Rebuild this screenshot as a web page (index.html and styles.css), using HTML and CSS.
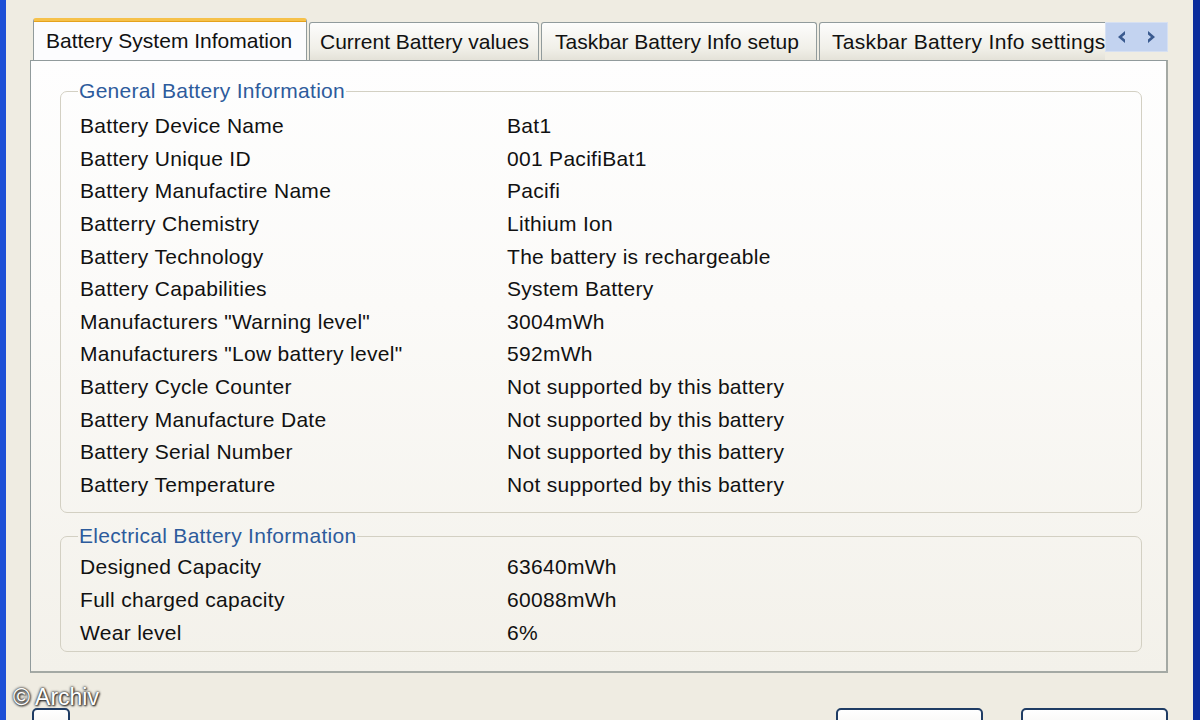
FILE: index.html
```html
<!DOCTYPE html>
<html lang="en">
<head>
  <meta charset="UTF-8">
  <title>Battery System Infomation</title>
  <link rel="stylesheet" href="styles.css">
</head>
<body>
  <div class="window">
    <div class="tabbar">
      <div class="tabs">
        <div class="tab tab-1 active">Battery System Infomation</div>
        <div class="tab tab-2">Current Battery values</div>
        <div class="tab tab-3">Taskbar Battery Info setup</div>
        <div class="tab tab-4">Taskbar Battery Info settings</div>
      </div>
      <div class="scroller">
        <svg width="12" height="16" viewBox="0 0 12 16"><path d="M10 2 L3 8 L10 14 L10 10.5 L7 8 L10 5.5 Z" fill="#3a5a8f"/></svg>
        <svg width="12" height="16" viewBox="0 0 12 16"><path d="M2 2 L9 8 L2 14 L2 10.5 L5 8 L2 5.5 Z" fill="#3a5a8f"/></svg>
      </div>
    </div>

    <div class="panel">
      <fieldset class="group group-general">
        <legend>General Battery Information</legend>
        <div class="rows">
          <span>Battery Device Name</span><span>Bat1</span>
          <span>Battery Unique ID</span><span>001 PacifiBat1</span>
          <span>Battery Manufactire Name</span><span>Pacifi</span>
          <span>Batterry Chemistry</span><span>Lithium Ion</span>
          <span>Battery Technology</span><span>The battery is rechargeable</span>
          <span>Battery Capabilities</span><span>System Battery</span>
          <span>Manufacturers "Warning level"</span><span>3004mWh</span>
          <span>Manufacturers "Low battery level"</span><span>592mWh</span>
          <span>Battery Cycle Counter</span><span>Not supported by this battery</span>
          <span>Battery Manufacture Date</span><span>Not supported by this battery</span>
          <span>Battery Serial Number</span><span>Not supported by this battery</span>
          <span>Battery Temperature</span><span>Not supported by this battery</span>
        </div>
      </fieldset>

      <fieldset class="group group-electrical">
        <legend>Electrical Battery Information</legend>
        <div class="rows">
          <span>Designed Capacity</span><span>63640mWh</span>
          <span>Full charged capacity</span><span>60088mWh</span>
          <span>Wear level</span><span>6%</span>
        </div>
      </fieldset>
    </div>

    <div class="buttons">
      <div class="btn btn-small"></div>
      <div class="spacer"></div>
      <div class="btn"></div>
      <div class="btn"></div>
    </div>

    <div class="watermark">© Archiv</div>
  </div>
</body>
</html>
```

FILE: styles.css
```css
body {
  margin: 0;
  font-family: "Liberation Sans", Arial, sans-serif;
  overflow: hidden;
}
.window {
  position: relative;
  width: 1200px;
  height: 720px;
  box-sizing: border-box;
  background: #efece2;
  border-left: 6px solid #1d4fd6;
  border-right: 7px solid #0a2c9c;
  padding: 18px 25px 0 24px;
  font-size: 21px;
  letter-spacing: 0.3px;
  color: #111;
  overflow: hidden;
}
.tabbar {
  display: flex;
  align-items: flex-end;
  height: 42px;
  position: relative;
  z-index: 1;
}
.tabs {
  flex: 1;
  min-width: 0;
  display: flex;
  align-items: flex-end;
  overflow: hidden;
  height: 42px;
  letter-spacing: 0;
}
.tab {
  flex: none;
  height: 38px;
  line-height: 38px;
  box-sizing: border-box;
  margin-left: 2px;
  padding-left: 10px;
  white-space: nowrap;
  border: 1px solid #919b9c;
  border-bottom: none;
  border-radius: 3px 3px 0 0;
  background: linear-gradient(#fdfdfc, #f0efe8 70%, #e4e2d8);
}
.tab-1 { width: 274px; margin-left: 3px; }
.tab-2 { width: 230px; }
.tab-3 { width: 276px; padding-left: 13px; }
.tab-4 { width: 300px; padding-left: 12px; letter-spacing: 0.3px; }
.tab.active {
  height: 43px;
  line-height: 40px;
  padding-left: 12px;
  margin-bottom: -1px;
  background: #fcfcfe;
  border-top: 3px solid #f6c14a;
  box-shadow: inset 0 1px 0 #e5a21d;
}
.scroller {
  width: 63px;
  height: 30px;
  margin-bottom: 8px;
  box-sizing: border-box;
  display: flex;
  align-items: center;
  justify-content: space-around;
  background: #c3d3f0;
  border: 1px solid #d6e0f2;
}
.panel {
  height: 613px;
  box-sizing: border-box;
  border: 1px solid #919b9c;
  border-right: 2px solid #a4a9a4;
  border-bottom: 2px solid #a4a9a4;
  background: linear-gradient(#fefefe, #fbfaf8 40%, #f3f1ea);
  padding: 18px 24px 0 29px;
}
.group {
  margin: 0;
  padding: 0 19px;
  border: 1px solid #d3d0c3;
  border-radius: 7px;
}
.group legend {
  padding: 0 1px;
  margin-left: -2px;
  line-height: 24px;
  color: #2d5b9c;
}
.rows {
  display: grid;
  grid-template-columns: 427px 1fr;
  grid-auto-rows: 32.6px;
  align-items: center;
  white-space: nowrap;
}
.group-general .rows {
  padding: 7px 0 11px;
}
.group-electrical {
  margin-top: 11px;
}
.group-electrical .rows {
  padding: 3px 0 2px;
}
.buttons {
  display: flex;
  margin-top: 35px;
  padding-left: 2px;
}
.btn {
  width: 147px;
  height: 30px;
  box-sizing: border-box;
  border: 2px solid #1f3c64;
  border-radius: 5px;
  background: linear-gradient(#ffffff, #f3f2ee);
  margin-left: 38px;
}
.btn-small {
  width: 38px;
  margin-left: 0;
}
.spacer {
  flex: 1;
}
.watermark {
  position: absolute;
  left: 7px;
  top: 684px;
  font-size: 23px;
  letter-spacing: 0;
  color: #fff;
  text-shadow: 0 0 2px #333, 0 0 3px #333, 1px 1px 2px #222;
}
```
